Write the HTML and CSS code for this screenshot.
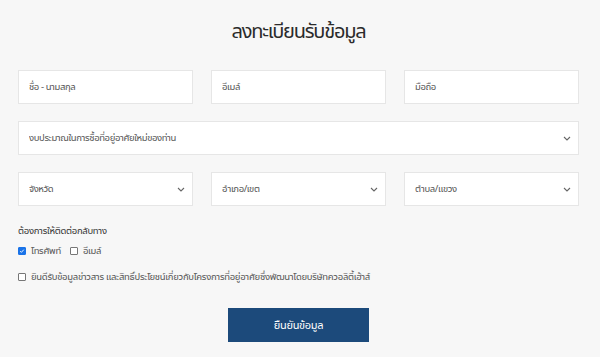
FILE: index.html
```html
<!DOCTYPE html>
<html lang="th">
<head>
<meta charset="utf-8">
<title>ลงทะเบียนรับข้อมูล</title>
<link rel="stylesheet" href="styles.css">
</head>
<body>
<main class="page">
  <h1 class="title">ลงทะเบียนรับข้อมูล</h1>
  <form class="form">
    <div class="row three">
      <input class="field" type="text" placeholder="ชื่อ - นามสกุล">
      <input class="field" type="text" placeholder="อีเมล์">
      <input class="field" type="text" placeholder="มือถือ">
    </div>
    <div class="row">
      <div class="select-wrap">
        <select class="field select"><option>งบประมาณในการซื้อที่อยู่อาศัยใหม่ของท่าน</option></select>
        <svg class="chev" width="8" height="5" viewBox="0 0 8 5"><path d="M1 1l3 3 3-3" fill="none" stroke="#666" stroke-width="1.1"/></svg>
      </div>
    </div>
    <div class="row three">
      <div class="select-wrap">
        <select class="field select"><option>จังหวัด</option></select>
        <svg class="chev" width="8" height="5" viewBox="0 0 8 5"><path d="M1 1l3 3 3-3" fill="none" stroke="#666" stroke-width="1.1"/></svg>
      </div>
      <div class="select-wrap">
        <select class="field select"><option>อำเภอ/เขต</option></select>
        <svg class="chev" width="8" height="5" viewBox="0 0 8 5"><path d="M1 1l3 3 3-3" fill="none" stroke="#666" stroke-width="1.1"/></svg>
      </div>
      <div class="select-wrap">
        <select class="field select"><option>ตำบล/แขวง</option></select>
        <svg class="chev" width="8" height="5" viewBox="0 0 8 5"><path d="M1 1l3 3 3-3" fill="none" stroke="#666" stroke-width="1.1"/></svg>
      </div>
    </div>
    <div class="contact">
      <div class="label">ต้องการให้ติดต่อกลับทาง</div>
      <div class="checks">
        <label class="check"><span class="box checked"><svg width="8" height="8" viewBox="0 0 8 8"><path d="M1.6 4.2l1.6 1.6 3.2-3.6" fill="none" stroke="#fff" stroke-width="1.2"/></svg></span>โทรศัพท์</label>
        <label class="check"><span class="box"></span>อีเมล์</label>
      </div>
    </div>
    <label class="check consent"><span class="box"></span>ยินดีรับข้อมูลข่าวสาร และสิทธิ์ประโยชน์เกี่ยวกับโครงการที่อยู่อาศัยซึ่งพัฒนาโดยบริษัทควอลิตี้เฮ้าส์</label>
    <div class="actions">
      <button type="button" class="submit">ยืนยันข้อมูล</button>
    </div>
  </form>
</main>
</body>
</html>
```
FILE: styles.css
```css
* { box-sizing: border-box; }
html, body {
  margin: 0;
  background: #f7f7f7;
}
body {
  font-family: "Noto Sans Thai", "Noto Sans", "Liberation Sans", sans-serif;
  color: #333;
}
.page {
  padding: 0 21px 0 18px;
}
.title {
  margin: 0;
  padding-top: 17px;
  height: 70px;
  text-align: center;
  font-size: 20px;
  letter-spacing: -1.2px;
  line-height: 30px;
  font-weight: 400;
  color: #2b2b2b;
}
.form {
  display: flex;
  flex-direction: column;
}
.row {
  display: grid;
  grid-template-columns: 1fr;
  gap: 18px;
  margin-bottom: 17px;
}
.row.three {
  grid-template-columns: repeat(3, 1fr);
}
.field {
  width: 100%;
  height: 34px;
  border: 1px solid #e6e6e6;
  background: #fff;
  padding: 0 10px;
  font-family: inherit;
  font-size: 9.5px;
  letter-spacing: -0.4px;
  color: #555;
  outline: none;
  border-radius: 0;
}
.field::placeholder {
  color: #555;
}
.select-wrap {
  position: relative;
}
.select {
  appearance: none;
  -webkit-appearance: none;
}
.chev {
  position: absolute;
  right: 8px;
  top: 15px;
}
.contact {
  margin-top: 1px;
}
.label {
  font-size: 9.5px;
  letter-spacing: -0.3px;
  line-height: 14px;
  color: #333;
}
.checks {
  display: flex;
  gap: 9px;
  margin-top: 6px;
}
.check {
  display: flex;
  align-items: center;
  gap: 5px;
  font-size: 9.5px;
  letter-spacing: -0.3px;
  line-height: 14px;
  color: #555;
}
.box {
  width: 8px;
  height: 8px;
  border: 1px solid #777;
  border-radius: 1px;
  background: #fff;
  display: inline-flex;
  align-items: center;
  justify-content: center;
  flex: none;
}
.box.checked {
  background: #1a73e8;
  border-color: #1a73e8;
}
.consent {
  margin-top: 12px;
}
.actions {
  display: flex;
  justify-content: center;
  margin-top: 24px;
}
.submit {
  width: 141px;
  height: 34px;
  border: 0;
  background: #1c4a7b;
  color: #fff;
  font-family: inherit;
  font-size: 11px;
  letter-spacing: -0.3px;
}
```
